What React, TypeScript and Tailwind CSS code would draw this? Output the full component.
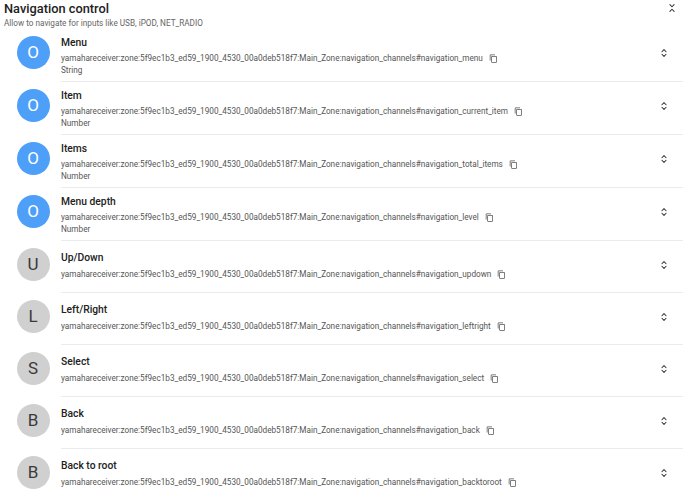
import { ChevronsUpDown, ChevronsDownUp } from 'lucide-react';

const prefix = 'yamahareceiver:zone:5f9ec1b3_ed59_1900_4530_00a0deb518f7:Main_Zone:navigation_channels#';

const items = [
    { letter: 'O', label: 'Menu', id: 'navigation_menu', type: 'String', blue: true },
    { letter: 'O', label: 'Item', id: 'navigation_current_item', type: 'Number', blue: true },
    { letter: 'O', label: 'Items', id: 'navigation_total_items', type: 'Number', blue: true },
    { letter: 'O', label: 'Menu depth', id: 'navigation_level', type: 'Number', blue: true },
    { letter: 'U', label: 'Up/Down', id: 'navigation_updown' },
    { letter: 'L', label: 'Left/Right', id: 'navigation_leftright' },
    { letter: 'S', label: 'Select', id: 'navigation_select' },
    { letter: 'B', label: 'Back', id: 'navigation_back' },
    { letter: 'B', label: 'Back to root', id: 'navigation_backtoroot' },
];

function CopyIcon() {
    return (
        <svg viewBox="0 0 24 24" className="w-[9px] h-[9px] ml-[6px] shrink-0" fill="#555">
            <path d="M16 1H4c-1.1 0-2 .9-2 2v14h2V3h12V1zm3 4H8c-1.1 0-2 .9-2 2v14c0 1.1.9 2 2 2h11c1.1 0 2-.9 2-2V7c0-1.1-.9-2-2-2zm0 16H8V7h11v14z" />
        </svg>
    );
}

export default function App() {
    return (
        <div className="w-[683px] h-[500px] overflow-hidden bg-white text-[#212121] font-['Roboto',sans-serif]">
            {/* Header */}
            <div className="flex items-start justify-between pl-[4px] pr-[6px] pb-[1px]">
                <div>
                    <h1 className="text-[12.8px] font-medium leading-[16px] pt-[1px]">Navigation control</h1>
                    <p className="text-[8.2px] leading-[10px] mt-[1px] text-[#666]">Allow to navigate for inputs like USB, iPOD, NET_RADIO</p>
                </div>
                <ChevronsDownUp className="w-[10px] h-[10px] mt-[3px] text-[#333]" strokeWidth={2.5} />
            </div>

            {/* List */}
            <ul>
                {items.map((it, i) => (
                    <li key={it.id} className={`flex items-start ${i < 4 ? 'h-[53px]' : 'h-[52px]'}`}>
                        <div className="w-[61px] shrink-0 flex justify-center pt-[7px] pl-[5px]">
                            <div
                                className={`w-[33px] h-[33px] rounded-full flex items-center justify-center text-[17px] ${
                                    it.blue ? 'bg-[#4d9ff8] text-white' : 'bg-[#d0d0d0] text-[#3a3a3a]'
                                }`}
                            >
                                {it.letter}
                            </div>
                        </div>
                        <div
                            className={`flex-1 h-full flex items-start justify-between pr-[14px] ${
                                i < items.length - 1 ? 'border-b border-[#ebebeb]' : ''
                            }`}
                        >
                            <div className={it.type ? 'pt-[7px]' : 'pt-[10px]'}>
                                <div className="text-[10.3px] font-medium leading-[14px]">{it.label}</div>
                                <div className={`flex items-center text-[8.2px] leading-[12px] text-[#555] ${it.type ? 'mt-[2px]' : 'mt-[3px]'}`}>
                                    <span>{prefix + it.id}</span>
                                    <CopyIcon />
                                </div>
                                {it.type && <div className="text-[8.2px] leading-[12px] text-[#555]">{it.type}</div>}
                            </div>
                            <ChevronsUpDown className="w-[10px] h-[10px] mt-[19px] text-[#333]" strokeWidth={2.5} />
                        </div>
                    </li>
                ))}
            </ul>
        </div>
    );
}
